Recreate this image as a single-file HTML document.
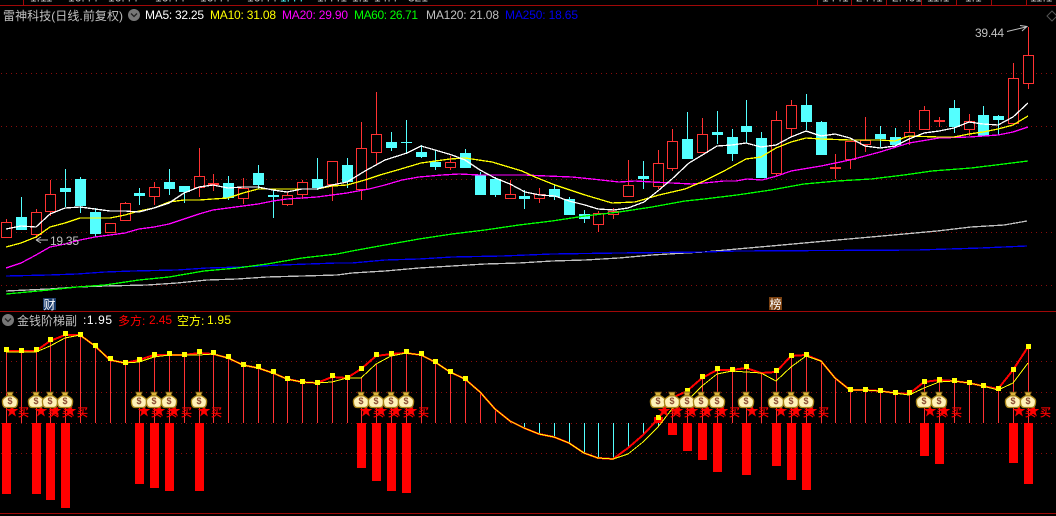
<!DOCTYPE html>
<html><head><meta charset="utf-8"><style>
html,body{margin:0;padding:0;background:#000;width:1056px;height:516px;overflow:hidden}
svg{display:block;position:absolute;left:0;top:0}
text{font-family:"Liberation Sans","WenQuanYi Zen Hei","Noto Sans CJK SC",sans-serif}
</style></head><body>
<svg width="1056" height="516" viewBox="0 0 1056 516" xmlns="http://www.w3.org/2000/svg">
<defs>
<path id="s" d="M0-6.500L1.600-2H6.300L2.500 .8L3.900 5.500L0 2.600L-3.900 5.500L-2.500 .8L-6.300-2H-1.600Z" fill="#f00"/>
<g id="b"><path d="M-3.500-8H3.500L2-4.200H-2Z" fill="#d9b23a" stroke="#5a3c08" stroke-width=".7"/><path d="M-2.500-4.200C-7.800-1.200-8-.2-7.400 3.500C-7 6.500-5.500 7.400-4 7.500H4C5.500 7.400 7 6.500 7.400 3.500C8-.2 7.800-1.200 2.500-4.200Z" fill="#fff2b8" stroke="#a88418" stroke-width="1.300"/></g>
</defs>
<rect width="1056" height="516" fill="#000"/>
<!-- top strip -->
<g font-size="12" fill="#c0c0c0">
<text x="30" y="1.500">1.11</text><text x="68" y="1.500">16.44</text><text x="108" y="1.500">16.44</text><text x="155" y="1.500">16.44</text><text x="200" y="1.500">16.44</text><text x="247" y="1.500">16.44</text><text x="280" y="1.500" fill="#54ffff">1.44</text><text x="317" y="1.500">1.441</text><text x="352" y="1.500">1.1</text><text x="374" y="1.500">14.4</text><text x="408" y="1.500">321</text>
<text x="822" y="1.500">1441</text><text x="856" y="1.500">2441</text><text x="892" y="1.500">2.401</text><text x="927" y="1.500">11.1</text><text x="965" y="1.500">1.1</text><text x="1030" y="1.500">11.1</text>
</g>
<g shape-rendering="crispEdges">
<path d="M0 5.500H1056M0 311.500H1056M0 513.500H1056" stroke="#a00808" fill="none"/>
<path d="M23.500 0V5M817.500 0V5M851.500 0V5M886.500 0V5M921.500 0V5M956.500 0V5M991.500 0V5M1026.500 0V5" stroke="#a00808" fill="none"/>
<path d="M1 73.500H1056M1 126.500H1056M1 179.500H1056M1 232.500H1056M1 285.500H1056M1 361.500H1056M1 392.500H1056M1 423.500H1056M1 453.500H1056" stroke="#8a0c0c" stroke-dasharray="1 4" fill="none"/>
<!-- cyan wicks -->
<path stroke="#54ffff" fill="none" d="M21.500 197V230M65.500 169V207M80.500 177V213M95.500 208V237M139.500 188V205M169.500 169V195M184.500 186V203M228.500 176V200M258.500 165V189M273.500 190V218M317.500 158V190M347.500 158V188M391.500 132V151M406.500 120V154M421.500 145V158M435.500 150V170M465.500 149V168M480.500 172V195M495.500 177V197M524.500 190V209M554.500 184V200M569.500 197V215M584.500 210V223M643.500 161V189M687.500 112V159M717.500 111V144M732.500 129V161M746.500 100V143M761.500 132V178M806.500 94V130M821.500 121V155M880.500 126V147M895.500 128V147M954.500 100V133M983.500 106V136M998.500 115V135"/>
<!-- cyan bodies -->
<path fill="#54ffff" d="M16 217h11v13h-11zM60 188h11v4h-11zM75 179h11v27h-11zM90 212h11v22h-11zM134 193h11v3h-11zM164 182h11v7h-11zM179 186h11v6h-11zM223 183h11v15h-11zM253 173h11v12h-11zM268 195h11v2h-11zM312 179h11v9h-11zM342 165h11v17h-11zM386 142h11v6h-11zM401 142h11v1h-11zM416 152h11v5h-11zM430 162h11v5h-11zM460 153h11v15h-11zM475 175h11v20h-11zM490 179h11v16h-11zM519 196h11v3h-11zM549 189h11v8h-11zM564 199h11v16h-11zM579 214h11v5h-11zM638 176h11v3h-11zM682 139h11v20h-11zM712 132h11v3h-11zM727 137h11v17h-11zM741 126h11v6h-11zM756 138h11v40h-11zM801 105h11v17h-11zM816 122h11v33h-11zM875 134h11v5h-11zM890 137h11v8h-11zM949 108h11v19h-11zM978 115h11v21h-11zM993 116h11v4h-11z"/>
<!-- red wicks -->
<path stroke="#ff3232" fill="none" d="M6.500 219V238M36.500 209V238M50.500 180V216M125.500 202V221M154.500 182V205M199.500 148V197M213.500 174V191M243.500 178V204M287.500 192V206M302.500 180V199M332.500 161V201M361.500 122V200M376.500 92V165M450.500 156V170M510.500 180V199M539.500 188V203M598.500 211V232M613.500 208V219M628.500 160V197M658.500 150V189M672.500 129V171M702.500 118V153M776.500 111V176M791.500 100V136M835.500 154V179M850.500 141V169M865.500 117V152M909.500 120V145M924.500 106V130M939.500 117V127M969.500 114V136M1013.500 63V124M1028.500 27V89"/>
<!-- red bodies -->
<path stroke="#ff3232" fill="#000" d="M1.500 222.500h10v15h-10zM31.500 212.500h10v22h-10zM45.500 194.500h10v17h-10zM105.500 223.500h10v9h-10zM120.500 203.500h10v17h-10zM149.500 187.500h10v9h-10zM194.500 176.500h10v11h-10zM208.500 183.500h10v1h-10zM238.500 188.500h10v10h-10zM282.500 195.500h10v9h-10zM297.500 182.500h10v12h-10zM327.500 161.500h10v23h-10zM356.500 148.500h10v41h-10zM371.500 134.500h10v18h-10zM445.500 162.500h10v5h-10zM505.500 194.500h10v4h-10zM534.500 194.500h10v4h-10zM593.500 213.500h10v11h-10zM608.500 211.500h10v3h-10zM623.500 185.500h10v11h-10zM653.500 163.500h10v23h-10zM667.500 141.500h10v27h-10zM697.500 134.500h10v18h-10zM771.500 120.500h10v53h-10zM786.500 105.500h10v23h-10zM830.500 167.500h10v1h-10zM845.500 141.500h10v18h-10zM860.500 140.500h10v4h-10zM904.500 132.500h10v4h-10zM919.500 110.500h10v19h-10zM934.500 120.500h10v1h-10zM964.500 121.500h10v8h-10zM1008.500 78.500h10v45h-10zM1023.500 55.500h10v28h-10z"/>
<!-- MAs -->
<g fill="none" stroke-width="1.300">
<polyline stroke="#c0c0c0" points="6,291 49,289 77,287 105,286 147,285 177,283 207,280 237,279 267,277 302,276 337,275 352,273 385,271 419,268 452,266 485,264 519,263 552,261 585,260 619,258 652,255 685,253 704,252 737,249 771,246 804,243 837,240 871,237 904,234 937,231 971,227 1004,225 1027,221"/>
<polyline stroke="#0000f0" points="6,276 49,275 77,274 105,272 133,271 177,270 207,268 240,267 280,265 337,263 352,263 385,260 419,259 452,257 502,256 552,254 619,253 704,252 737,251 917,250 981,248 1027,246"/>
<polyline stroke="#00ff00" points="6,294 49,290 77,287 105,285 139,280 169,277 204,271 237,268 267,264 302,258 337,254 352,251 385,245 419,239 452,234 485,230 519,225 552,221 585,216 619,212 652,207 685,201 704,199 737,195 771,190 804,184 837,181 871,179 904,175 932,171 971,168 1004,164 1028,161"/>
<polyline stroke="#ff00ff" points="6,268 21,263 36,255 50,247 65,244 80,240 95,237 110,235 125,233 139,229 154,227 169,224 184,219 199,214 213,210 228,208 243,206 258,204 273,201 287,199 302,198 317,197 332,195 347,193 369,189 385,185 402,180 419,177 442,175 459,174 480,175 502,175 525,175 547,176 572,177 592,179 619,182 635,181 652,182 672,183 692,184 704,183 724,181 736,181 747,179 762,180 777,176 791,171 821,166 850,160 880,152 909,143 939,138 969,137 998,135 1013,132 1028,127"/>
<polyline stroke="#ffff00" points="6,247 21,243 36,237 50,227 65,223 80,218 95,218 110,218 125,215 139,211 154,208 169,202 184,200 199,200 213,199 228,198 243,193 258,189 273,189 287,189 302,189 317,189 332,186 347,185 365,180 380,175 394,171 421,163 450,159 465,158 492,162 522,171 535,177 555,185 585,195 612,203 635,202 659,195 685,189 704,181 724,171 746,159 761,157 776,148 791,142 806,138 821,139 850,140 880,140 895,141 909,136 939,137 954,137 969,134 983,132 998,129 1013,125 1028,116"/>
<polyline stroke="#ffffff" points="6,229 21,226 36,227 50,214 65,208 80,207 95,209 110,211 125,211 139,212 154,208 169,203 184,193 199,187 213,185 228,188 243,187 258,187 273,190 287,192 302,189 317,189 332,185 347,182 365,171 385,160 407,153 421,146 435,150 452,155 465,160 480,170 495,178 510,184 525,192 540,195 555,196 569,201 585,205 598,209 614,210 628,208 644,202 659,190 672,179 689,163 704,154 717,146 732,145 746,143 761,147 776,145 791,137 806,131 821,136 835,134 850,138 865,146 880,148 895,146 909,139 924,133 939,131 954,128 969,122 983,124 998,125 1013,117 1028,103"/>
</g>
<!-- sub-panel vertical lines -->
<path stroke="#ff3232" fill="none" d="M6.500 351V423M21.500 351V423M36.500 351V423M50.500 341V423M65.500 335V423M80.500 335V423M95.500 346V423M110.500 360V423M125.500 363V423M139.500 360V423M154.500 355V423M169.500 355V423M184.500 355V423M199.500 353V423M213.500 354V423M228.500 358V423M243.500 365V423M258.500 368V423M273.500 373V423M287.500 379V423M302.500 382V423M317.500 383V423M332.500 377V423M347.500 378V423M361.500 378V423M376.500 364V423M391.500 356V423M406.500 353V423M421.500 355V423M435.500 362V423M450.500 372V423M465.500 379V423M480.500 392V423M495.500 409V423M510.500 421V423M672.500 398V423M687.500 391V423M702.500 378V423M717.500 370V423M732.500 370V423M746.500 368V423M761.500 373V423M776.500 372V423M791.500 356V423M806.500 355V423M821.500 361V423M835.500 378V423M850.500 390V423M865.500 390V423M880.500 391V423M895.500 393V423M909.500 394V423M924.500 382V423M939.500 380V423M954.500 381V423M969.500 383V423M983.500 386V423M998.500 389V423M1013.500 370V423M1028.500 347V423"/>
<path stroke="#54ffff" fill="none" d="M524.500 428V423M539.500 434V423M554.500 437V423M569.500 443V423M584.500 453V423M598.500 458V423M613.500 459V423M628.500 448V423M643.500 435V423M658.500 427V423"/>
<!-- bars -->
<path fill="#f00" d="M2 423h9v71h-9zM32 423h9v71h-9zM46 423h9v77h-9zM61 423h9v85h-9zM135 423h9v61h-9zM150 423h9v65h-9zM165 423h9v68h-9zM195 423h9v68h-9zM357 423h9v45h-9zM372 423h9v58h-9zM387 423h9v68h-9zM402 423h9v70h-9zM654 417h9v6h-9zM668 423h9v12h-9zM683 423h9v28h-9zM698 423h9v37h-9zM713 423h9v49h-9zM742 423h9v52h-9zM772 423h9v43h-9zM787 423h9v57h-9zM802 423h9v67h-9zM920 423h9v33h-9zM935 423h9v41h-9zM1009 423h9v40h-9zM1024 423h9v61h-9z"/>
<!-- thick red + thin yellow -->
<polyline fill="none" stroke="#f00" stroke-width="2" points="6,351 21,351 36,351 50,341 65,335 80,335 95,346 110,360 125,363 139,360 154,355 169,355 184,355 199,353 213,354 228,358 243,365 258,368 273,373 287,379 302,382 317,383 332,377 347,378 361,369 376,356 391,354 406,353 421,355 435,362 450,372 465,379 480,392 495,409 510,421 524,428 539,434 554,437 569,443 584,453 598,458 613,459 628,448 643,435 658,419 672,398 687,391 702,378 717,370 732,370 746,368 761,373 776,372 791,356 806,355 821,361 835,378 850,390 865,390 880,391 895,393 909,394 924,382 939,380 954,381 969,383 983,386 998,389 1013,370 1028,347"/>
<polyline fill="none" stroke="#ff0" stroke-width="1" points="6,352 21,352 36,352 50,346 65,338 80,335 95,346 110,360 125,363 139,362 154,357 169,355 184,355 199,355 213,354 228,358 243,365 258,368 273,373 287,379 302,382 317,383 332,382 347,378 361,378 376,364 391,356 406,353 421,355 435,362 450,372 465,379 480,392 495,409 510,421 524,428 539,434 554,437 569,443 584,453 598,458 613,459 628,454 643,442 658,427 672,409 687,401 702,386 717,374 732,371 746,372 761,373 776,381 791,367 806,356 821,361 835,378 850,390 865,390 880,391 895,393 909,395 924,388 939,382 954,381 969,383 983,386 998,390 1013,383 1028,363"/>
<!-- yellow squares -->
<path fill="#ff0" d="M4 347h5v5h-5zM19 348h5v5h-5zM34 347h5v5h-5zM48 337h5v5h-5zM63 331h5v5h-5zM78 332h5v5h-5zM93 343h5v5h-5zM108 356h5v5h-5zM123 360h5v5h-5zM137 357h5v5h-5zM152 352h5v5h-5zM167 351h5v5h-5zM182 352h5v5h-5zM197 349h5v5h-5zM211 350h5v5h-5zM226 354h5v5h-5zM241 362h5v5h-5zM256 364h5v5h-5zM271 369h5v5h-5zM285 376h5v5h-5zM300 379h5v5h-5zM315 380h5v5h-5zM330 373h5v5h-5zM345 375h5v5h-5zM359 366h5v5h-5zM374 352h5v5h-5zM389 351h5v5h-5zM404 349h5v5h-5zM419 351h5v5h-5zM433 359h5v5h-5zM448 369h5v5h-5zM463 376h5v5h-5zM656 415h5v5h-5zM670 394h5v5h-5zM685 388h5v5h-5zM700 374h5v5h-5zM715 366h5v5h-5zM730 367h5v5h-5zM744 364h5v5h-5zM774 368h5v5h-5zM789 353h5v5h-5zM804 352h5v5h-5zM848 387h5v5h-5zM863 387h5v5h-5zM878 388h5v5h-5zM893 390h5v5h-5zM907 390h5v5h-5zM922 379h5v5h-5zM937 377h5v5h-5zM952 378h5v5h-5zM967 380h5v5h-5zM981 383h5v5h-5zM996 386h5v5h-5zM1011 367h5v5h-5zM1026 344h5v5h-5z"/>
</g>
<!-- 买 -->
<text y="416" font-size="11" fill="#f00" stroke="#f00" stroke-width=".3" x="18 48 62 77 151 166 181 211 373 388 403 418 670 684 699 714 729 758 788 803 818 936 951 1025 1040">买买买买买买买买买买买买买买买买买买买买买买买买买</text>
<!-- stars -->
<use href="#s" x="12" y="411"/><use href="#s" x="41" y="411"/><use href="#s" x="55" y="411"/><use href="#s" x="70" y="411"/><use href="#s" x="144" y="411"/><use href="#s" x="159" y="411"/><use href="#s" x="174" y="411"/><use href="#s" x="204" y="411"/><use href="#s" x="366" y="411"/><use href="#s" x="381" y="411"/><use href="#s" x="396" y="411"/><use href="#s" x="411" y="411"/><use href="#s" x="664" y="411"/><use href="#s" x="677" y="411"/><use href="#s" x="692" y="411"/><use href="#s" x="707" y="411"/><use href="#s" x="722" y="411"/><use href="#s" x="752" y="411"/><use href="#s" x="781" y="411"/><use href="#s" x="796" y="411"/><use href="#s" x="811" y="411"/><use href="#s" x="930" y="411"/><use href="#s" x="944" y="411"/><use href="#s" x="1019" y="411"/><use href="#s" x="1033" y="411"/>
<!-- money bags -->
<use href="#b" x="10" y="400"/><use href="#b" x="36" y="400"/><use href="#b" x="50" y="400"/><use href="#b" x="65" y="400"/><use href="#b" x="139" y="400"/><use href="#b" x="154" y="400"/><use href="#b" x="169" y="400"/><use href="#b" x="199" y="400"/><use href="#b" x="361" y="400"/><use href="#b" x="376" y="400"/><use href="#b" x="391" y="400"/><use href="#b" x="406" y="400"/><use href="#b" x="658" y="400"/><use href="#b" x="672" y="400"/><use href="#b" x="687" y="400"/><use href="#b" x="701" y="400"/><use href="#b" x="717" y="400"/><use href="#b" x="746" y="400"/><use href="#b" x="776" y="400"/><use href="#b" x="791" y="400"/><use href="#b" x="806" y="400"/><use href="#b" x="924" y="400"/><use href="#b" x="939" y="400"/><use href="#b" x="1013" y="400"/><use href="#b" x="1028" y="400"/>
<text y="404" font-size="9" font-weight="bold" fill="#8a4a30" x="7.500 33.500 47.500 62.500 136.500 151.500 166.500 196.500 358.500 373.500 388.500 403.500 655.500 669.500 684.500 698.500 714.500 743.500 773.500 788.500 803.500 921.500 936.500 1010.500 1025.500">$$$$$$$$$$$$$$$$$$$$$$$$$</text>
<!-- header labels -->
<text x="3" y="20" font-size="12" fill="#c0c0c0" textLength="120" lengthAdjust="spacing">雷神科技(日线.前复权)</text>
<circle cx="134" cy="15" r="6" fill="#777"/><path d="M131 13.500L134 16.500L137 13.500" fill="none" stroke="#222" stroke-width="1.300"/>
<g font-size="12">
<text x="145" y="19" fill="#fff" textLength="59" lengthAdjust="spacing">MA5: 32.25</text>
<text x="210" y="19" fill="#ff0" textLength="66" lengthAdjust="spacing">MA10: 31.08</text>
<text x="282" y="19" fill="#f0f" textLength="66" lengthAdjust="spacing">MA20: 29.90</text>
<text x="354" y="19" fill="#0f0" textLength="64" lengthAdjust="spacing">MA60: 26.71</text>
<text x="426" y="19" fill="#c0c0c0" textLength="73" lengthAdjust="spacing">MA120: 21.08</text>
<text x="505" y="19" fill="#0000f0" textLength="73" lengthAdjust="spacing">MA250: 18.65</text>
</g>
<!-- price labels -->
<text x="975" y="37" font-size="12" fill="#c0c0c0" textLength="29" lengthAdjust="spacing">39.44</text>
<path d="M1007 31.500L1026 27M1020 25.500L1027 26.500L1022 31" fill="none" stroke="#c0c0c0" stroke-width="1"/>
<path d="M1052 11L1047 16L1052 21L1057 16Z" fill="none" stroke="#555"/>
<text x="50" y="245" font-size="12" fill="#c0c0c0" textLength="29" lengthAdjust="spacing">19.35</text>
<path d="M36 240H48M36 240L41 237M36 240L41 243" fill="none" stroke="#c0c0c0"/>
<!-- badges -->
<rect x="43" y="298" width="13" height="12" fill="#1c3c6c"/>
<text x="43.500" y="309" font-size="12" fill="#fff">财</text>
<rect x="769" y="297" width="13" height="13" fill="#7a4010"/>
<text x="769.500" y="308.500" font-size="12" fill="#fff">榜</text>
<!-- sub header -->
<circle cx="8" cy="320" r="6" fill="#777"/><path d="M5 318.500L8 321.500L11 318.500" fill="none" stroke="#222" stroke-width="1.300"/>
<text x="17" y="325" font-size="12" fill="#c0c0c0">金钱阶梯副</text>
<text x="83" y="324" font-size="12" fill="#fff" textLength="29" lengthAdjust="spacing">:1.95</text>
<text x="118" y="325" font-size="12" fill="#f00">多方:</text>
<text x="149" y="324" font-size="12" fill="#f00" textLength="23" lengthAdjust="spacing">2.45</text>
<text x="177" y="325" font-size="12" fill="#ff0">空方:</text>
<text x="207" y="324" font-size="12" fill="#ff0" textLength="24" lengthAdjust="spacing">1.95</text>
</svg>
</body></html>
